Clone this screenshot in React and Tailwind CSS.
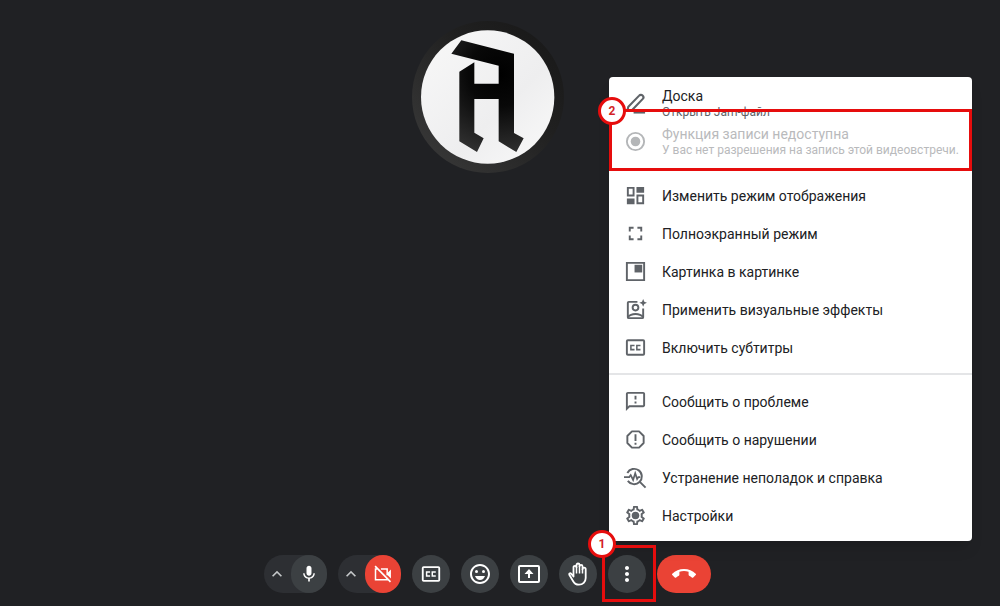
import React, { useState } from "react";
import clsx from "clsx";
import {
  MdCallEnd,
  MdFullscreen,
  MdKeyboardArrowUp,
  MdMic,
  MdMoreVert,
  MdOutlineEmojiEmotions,
  MdOutlineFeedback,
  MdOutlineSettings,
} from "react-icons/md";

const Svg = ({ className, children }) => (
  <svg viewBox="0 0 24 24" className={className} fill="none" stroke="currentColor" strokeWidth="2" aria-hidden="true">
    {children}
  </svg>
);

const PenIcon = ({ className }) => (
  <Svg className={className}>
    <path d="M3.5 19.500 4.500 15.500 15.800 3.800a2.500 2.500 0 0 1 3.800 3.400L8.500 18.800z" strokeWidth="2.200" />
    <path d="M10 21.500h12" />
  </Svg>
);

const RecordIcon = ({ className }) => (
  <Svg className={className}>
    <circle cx="12" cy="12" r="9" />
    <circle cx="12" cy="12" r="5" fill="currentColor" stroke="none" />
  </Svg>
);

const LayoutIcon = ({ className }) => (
  <Svg className={className}>
    <path d="M4 4h6v8H4zM14 12h6v8h-6z" />
    <path d="M13 3h8v6h-8zM3 15h8v6H3z" fill="currentColor" stroke="none" />
  </Svg>
);

const PipIcon = ({ className }) => (
  <Svg className={className}>
    <path d="M3 3h18v18H3z" />
    <path d="M11 5h8v8h-8z" fill="currentColor" stroke="none" />
  </Svg>
);

const EffectsIcon = ({ className }) => (
  <Svg className={className}>
    <path d="M14 4H5a1 1 0 0 0-1 1v15a1 1 0 0 0 1 1h14a1 1 0 0 0 1-1v-9" />
    <circle cx="12" cy="10" r="3" />
    <path d="M4 20c3.500-4.500 12.500-4.500 16 0" />
    <path d="m20 1 1.200 2.800L24 5l-2.800 1.200L20 9l-1.200-2.800L16 5l2.800-1.200z" fill="currentColor" stroke="none" />
  </Svg>
);

const CaptionsIcon = ({ className }) => (
  <Svg className={className}>
    <rect x="3" y="4.500" width="18" height="15" rx="1" />
    <path d="M11 9.800H7.200v4.400H11M17.200 9.800h-3.800v4.400h3.800" strokeWidth="1.600" />
  </Svg>
);

const ReportIcon = ({ className }) => (
  <Svg className={className}>
    <path d="M8.300 3.500h7.400l4.800 4.800v7.400l-4.800 4.800H8.300l-4.800-4.800V8.300z" strokeLinejoin="round" />
    <path d="M12 6.500v7M12 15.500v2" />
  </Svg>
);

const TroubleshootIcon = ({ className }) => (
  <Svg className={className}>
    <path d="M3.500 7.300A8 8 0 1 1 4 15.500" />
    <path d="m16.500 16.500 6 6" />
    <path d="M0 11.500h5.500l1.500-2 2.500 5 2.200-7 2 6 1.300-2h2" strokeWidth="1.800" />
  </Svg>
);

const GearIcon = ({ className }) => (
  <span className={clsx("relative", className)}>
    <MdOutlineSettings className="size-full" />
    <Svg className="absolute inset-0 size-full">
      <circle cx="12" cy="12" r="3.500" fill="currentColor" stroke="none" />
    </Svg>
  </span>
);

const CameraOffIcon = ({ className }) => (
  <Svg className={className}>
    <path d="M5 6H3v13h14v-2M9.500 6H17v7.500" strokeWidth="1.800" />
    <path d="m17 11 4.500-4.500v11L17 13z" fill="currentColor" stroke="none" />
    <path d="m2.500 2.500 18.500 19" />
  </Svg>
);

const PresentIcon = ({ className }) => (
  <Svg className={className}>
    <rect x="2" y="4" width="20" height="16" rx="1" />
    <path d="m12 7-4.500 5H11v4h2v-4h3.500z" fill="currentColor" stroke="none" />
  </Svg>
);

const HandIcon = ({ className }) => (
  <Svg className={className}>
    <path
      d="M7.500 14.500V5.300a1.500 1.500 0 0 1 3 0V3a1.500 1.500 0 0 1 3 0v1.300a1.500 1.500 0 0 1 3 0v3a1.500 1.500 0 0 1 3.200 0V16c0 4-3 6.700-6.700 6.700-3 0-4.800-1.400-6-3.700l-3.700-6.200c-.5-1 .7-2 1.700-1.300z"
      strokeWidth="1.800"
      strokeLinejoin="round"
    />
    <path d="M10.500 5v6.500M13.500 4v7.500M16.500 7v4.500" strokeWidth="1.500" />
  </Svg>
);

const groups = [
  [
    { title: "Доска", note: "Открыть Jam-файл", icon: PenIcon },
    {
      title: "Функция записи недоступна",
      note: "У вас нет разрешения на запись этой видеовстречи.",
      icon: RecordIcon,
      disabled: true,
    },
  ],
  [
    { title: "Изменить режим отображения", icon: LayoutIcon },
    { title: "Полноэкранный режим", icon: MdFullscreen },
    { title: "Картинка в картинке", icon: PipIcon },
    { title: "Применить визуальные эффекты", icon: EffectsIcon },
    { title: "Включить субтитры", icon: CaptionsIcon },
  ],
  [
    { title: "Сообщить о проблеме", icon: MdOutlineFeedback },
    { title: "Сообщить о нарушении", icon: ReportIcon },
    { title: "Устранение неполадок и справка", icon: TroubleshootIcon },
    { title: "Настройки", icon: GearIcon },
  ],
];

function MenuItem({ title, note, icon: Icon, disabled }) {
  return (
    <button
      disabled={disabled}
      className={clsx(
        "flex h-[38px] w-full items-center gap-[15px] px-[15px] text-left",
        disabled ? "text-[#b9babc]" : "text-[#202124]"
      )}
    >
      <Icon className={clsx("size-[23px] shrink-0", disabled ? "text-[#b4b6b8]" : "text-[#5f6368]")} />
      <span className="flex flex-col pt-0.5 whitespace-nowrap">
        <span className="text-sm leading-4">{title}</span>
        {note && (
          <span className={clsx("text-xs leading-4", !disabled && "text-[#5f6368]")}>{note}</span>
        )}
      </span>
    </button>
  );
}

function Marker({ children, className }) {
  return (
    <span
      className={clsx(
        "absolute flex size-7 items-center justify-center rounded-full border-3 border-[#e60d0d] bg-white text-xs font-bold text-[#d31f26]",
        className
      )}
    >
      {children}
    </span>
  );
}

function OptionsMenu() {
  return (
    <div className="absolute right-7 bottom-[65px] w-[363px] rounded-sm bg-white py-[7px] shadow-lg">
      {groups.map((items, i) => (
        <div
          key={items[0].title}
          className={clsx(i === 1 && "mt-4", i === 2 && "mt-[7px] border-t-2 border-[#e4e5e7] pt-[7px]")}
        >
          {items.map((item) => (
            <MenuItem key={item.title} {...item} />
          ))}
        </div>
      ))}
      <div className="pointer-events-none absolute inset-x-0 top-8 h-[62px] border-3 border-[#e60d0d]">
        <Marker className="-top-[15px] -left-[14px]">2</Marker>
      </div>
    </div>
  );
}

function RoundButton({ label, icon: Icon, onClick, className, iconClass = "size-6" }) {
  return (
    <button
      aria-label={label}
      onClick={onClick}
      className={clsx("flex h-[38px] items-center justify-center rounded-full text-white", className)}
    >
      <Icon className={iconClass} />
    </button>
  );
}

function DeviceControl({ settingsLabel, children }) {
  return (
    <div className="flex w-[63px] items-center justify-between rounded-full bg-[#2d2f33]">
      <button aria-label={settingsLabel} className="flex h-[38px] w-7 items-center justify-center text-[#c4c7c9]">
        <MdKeyboardArrowUp className="size-5" />
      </button>
      {children}
    </div>
  );
}

function Avatar() {
  return (
    <svg viewBox="35 31 456 456" className="size-[152px]" role="img">
      <defs>
        <linearGradient id="ring" x1="0" y1="1" x2="1" y2="0">
          <stop offset="0" stopColor="#3c3c3c" />
          <stop offset="0.6" stopColor="#202020" />
          <stop offset="1" stopColor="#171717" />
        </linearGradient>
        <linearGradient id="disc" x1="0" y1="0" x2="1" y2="1">
          <stop offset="0" stopColor="#f8f8f8" />
          <stop offset="0.6" stopColor="#eeeeef" />
          <stop offset="1" stopColor="#fafafa" />
        </linearGradient>
        <radialGradient id="mark" gradientUnits="userSpaceOnUse" cx="300" cy="190" r="240">
          <stop offset="0" stopColor="#000" />
          <stop offset="0.4" stopColor="#080808" />
          <stop offset="1" stopColor="#303030" />
        </radialGradient>
      </defs>
      <circle cx="263" cy="259" r="228" fill="url(#ring)" />
      <circle cx="262" cy="259" r="200" fill="url(#disc)" />
      <path
        d="M183 89 341 129V367L370 383 348 424 295 392V265H222V366L250 383 230 424 177 392V183L222 155V219H295V165L153 129Z"
        fill="url(#mark)"
      />
    </svg>
  );
}

function App() {
  const [menuOpen, setMenuOpen] = useState(true);

  return (
    <main className="relative flex min-h-screen flex-col items-center justify-between bg-[#202124] pt-[21px] pr-[25px] pb-[13px] font-['Roboto',sans-serif]">
      <Avatar />

      {menuOpen && <OptionsMenu />}

      <footer className="flex items-center gap-[11px]">
        <DeviceControl settingsLabel="Настройки звука">
          <RoundButton label="Микрофон" icon={MdMic} className="w-[38px] bg-[#3c4043]" iconClass="size-5" />
        </DeviceControl>
        <DeviceControl settingsLabel="Настройки видео">
          <RoundButton label="Камера" icon={CameraOffIcon} className="w-[38px] bg-[#ea4335]" iconClass="size-5" />
        </DeviceControl>
        <RoundButton label="Субтитры" icon={CaptionsIcon} className="w-[38px] bg-[#3c4043]" iconClass="size-[22px]" />
        <RoundButton label="Реакции" icon={MdOutlineEmojiEmotions} className="w-[38px] bg-[#3c4043]" />
        <RoundButton label="Показать экран" icon={PresentIcon} className="w-[38px] bg-[#3c4043]" />
        <RoundButton label="Поднять руку" icon={HandIcon} className="w-[38px] bg-[#3c4043]" />
        <div className="relative">
          <RoundButton
            label="Ещё"
            icon={MdMoreVert}
            onClick={() => setMenuOpen(!menuOpen)}
            className="w-[38px] bg-[#3c4043]"
          />
          <div className="pointer-events-none absolute -top-[10px] -right-[10px] -bottom-[9px] -left-[6px] border-3 border-[#e60d0d]">
            <Marker className="-top-[18px] -left-[17px]">1</Marker>
          </div>
        </div>
        <RoundButton label="Завершить звонок" icon={MdCallEnd} className="w-[54px] bg-[#ea4335]" />
      </footer>
    </main>
  );
}

export default App;
